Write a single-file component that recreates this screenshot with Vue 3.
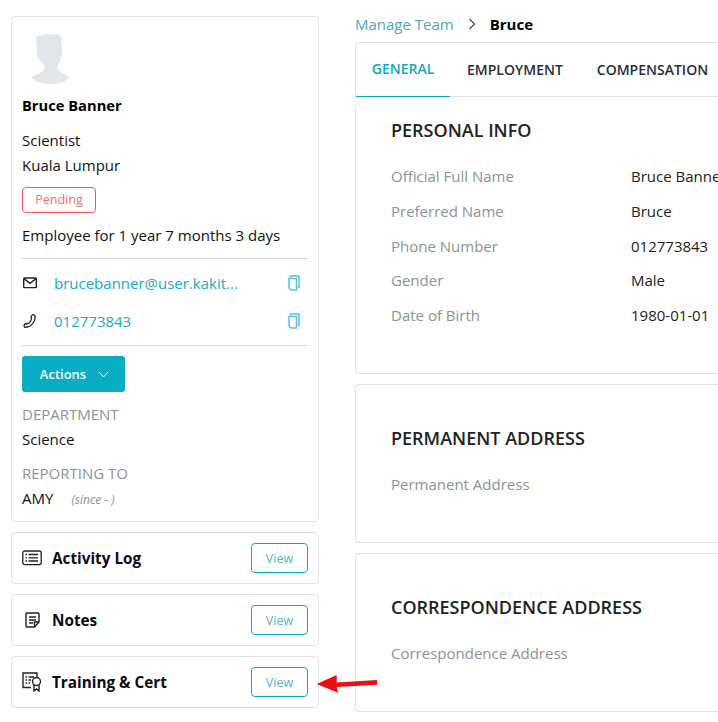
<script setup>
const info = [
  ['Official Full Name', 'Bruce Banner'],
  ['Preferred Name', 'Bruce'],
  ['Phone Number', '012773843'],
  ['Gender', 'Male'],
  ['Date of Birth', '1980-01-01'],
]
</script>

<template>
  <div class="page">
    <aside class="left">
      <section class="card profile">
        <svg class="avatar" width="60" height="52" viewBox="0 0 60 52">
          <path d="M14 5 L17 2 L20 3 L24 1 L30 2 L34 1 L38 3 L40 6 L39 9 L40 14 L40 20 C40 25 38 29 36 31 C35 33 35 35 36 37 C39 40 44 42 48 44 C43 49 36 51 28 51 C20 51 14 49 9 44 C14 42 19 40 22 37 C23 35 23 33 21 31 C18 28 15 25 15 20 L15 12 Z" fill="#e2e5e9"/>
        </svg>
        <div class="name">Bruce Banner</div>
        <div class="line job">Scientist</div>
        <div class="line city">Kuala Lumpur</div>
        <div class="badge">Pending</div>
        <div class="line tenure">Employee for 1 year 7 months 3 days</div>
        <div class="rule"></div>
        <div class="contact first">
          <svg class="cicon" width="16" height="12" viewBox="0 0 16 12" fill="none" stroke="#222" stroke-width="1.400"><rect x="1.700" y="1" width="12.600" height="9.600" rx="0.800"/><path d="M2 1.600 L8 6.400 L14 1.600"/></svg>
          <span class="link">brucebanner@user.kakit...</span>
          <svg class="copy" width="12" height="16" viewBox="0 0 12 16" fill="none" stroke="#5cc0d6" stroke-width="1.500"><path d="M2.500 2.500 V1 H11 V12.500 H9.500"/><path d="M1 3.500 H8.500 V15 H3 L1 13 Z"/></svg>
        </div>
        <div class="contact second">
          <svg class="cicon" width="16" height="16" viewBox="0 0 16 16" fill="none" stroke="#222" stroke-width="1.300"><path d="M13 5 C13 9 9 13.500 5 14 L3 14.400 C1.800 13.500 1.800 11.800 3 10.800 L5 10.500 L5.500 11 C7.800 9.800 9.300 7.500 9.500 5 L9 4 C9.600 2.200 10.700 1.400 11.500 1.600 C12.800 2 13.500 3.500 13 5 Z"/></svg>
          <span class="link">012773843</span>
          <svg class="copy" width="12" height="16" viewBox="0 0 12 16" fill="none" stroke="#5cc0d6" stroke-width="1.500"><path d="M2.500 2.500 V1 H11 V12.500 H9.500"/><path d="M1 3.500 H8.500 V15 H3 L1 13 Z"/></svg>
        </div>
        <div class="rule rule2"></div>
        <button class="actions">
          <span>Actions</span>
          <svg width="11" height="7" viewBox="0 0 11 7" fill="none" stroke="#fff" stroke-width="1"><path d="M1 1 L5.500 6 L10 1"/></svg>
        </button>
        <div class="label dept">DEPARTMENT</div>
        <div class="line sci">Science</div>
        <div class="label rep">REPORTING TO</div>
        <div class="amy"><span>AMY</span><em>(since - )</em></div>
      </section>

      <section class="card mini">
        <svg width="20" height="16" viewBox="0 0 20 16" fill="none" stroke="#222" stroke-width="1.300"><rect x="0.800" y="1" width="18.400" height="13.600" rx="2"/><path d="M6.500 4.500 H16 M6.500 7.800 H16 M6.500 11 H16 M3.500 4.500 H5 M3.500 7.800 H5 M3.500 11 H5"/></svg>
        <strong>Activity Log</strong>
        <button class="view">View</button>
      </section>
      <section class="card mini">
        <svg class="ni" width="15" height="16" viewBox="0 0 15 16" fill="none" stroke="#222" stroke-width="1.400"><path d="M2 1 H13 Q14 1 14 2 V10 L9.500 15 H2 Q1 15 1 14 V2 Q1 1 2 1 Z"/><path d="M9.500 15 V10 H14 M4 5 H11 M4 8 H11 M4 11 H8"/></svg>
        <strong>Notes</strong>
        <button class="view">View</button>
      </section>
      <section class="card mini">
        <svg width="20" height="20" viewBox="0 0 20 20" fill="none" stroke="#222" stroke-width="1.400"><path d="M9 15.500 H1 V1 H15 V5"/><path d="M3.500 5 H5 M6.500 5 H12 M3.500 8 H5 M6.500 8 H9 M3.500 11 H5 M6.500 11 H8"/><circle cx="14.500" cy="9.500" r="4"/><path d="M12 13 V19 L14.500 17 L17 19 V13"/></svg>
        <strong>Training &amp; Cert</strong>
        <button class="view">View</button>
      </section>
    </aside>

    <main class="right">
      <nav class="crumb">
        <span class="crumb-link">Manage Team</span>
        <svg width="8" height="12" viewBox="0 0 8 12" fill="none" stroke="#444" stroke-width="1.200"><path d="M1.500 1 L6.500 6 L1.500 11"/></svg>
        <strong>Bruce</strong>
      </nav>
      <div class="tabs">
        <div class="tab active">GENERAL</div>
        <div class="tab">EMPLOYMENT</div>
        <div class="tab">COMPENSATION</div>
      </div>
      <section class="panel personal">
        <h2>PERSONAL INFO</h2>
        <div class="rows">
          <div class="row" v-for="r in info" :key="r[0]">
            <span class="key">{{ r[0] }}</span>
            <span class="val">{{ r[1] }}</span>
          </div>
        </div>
      </section>
      <section class="panel addr">
        <h2>PERMANENT ADDRESS</h2>
        <div class="key">Permanent Address</div>
      </section>
      <section class="panel addr">
        <h2>CORRESPONDENCE ADDRESS</h2>
        <div class="key">Correspondence Address</div>
      </section>
    </main>

    <svg class="arrow" width="64" height="24" viewBox="0 0 64 24">
      <path d="M1.700 12 L21.700 3 L21.700 10.500 L62 8 L62 12.700 L21.700 15 L23 20.700 Z" fill="#f00c12"/>
    </svg>
  </div>
</template>

<style>
html, body { margin: 0; background: #fff; }
</style>

<style scoped>
.page {
  position: relative;
  width: 718px;
  height: 722px;
  overflow: hidden;
  display: flex;
  gap: 36px;
  padding: 16px 0 0 11px;
  box-sizing: border-box;
  font-family: "Open Sans", "Noto Sans", sans-serif;
  font-size: 15px;
  color: #111;
}
.left { width: 308px; flex: none; display: flex; flex-direction: column; gap: 10px; }
.card { border: 1px solid #dfe2e6; border-radius: 4px; box-sizing: border-box; background: #fff; }
.profile { height: 506px; padding: 16px 10px 0; display: flex; flex-direction: column; }
.avatar { display: block; height: 52px; flex: none; }
.name { font-weight: 700; font-size: 14.700px; line-height: 20px; margin-top: 10px; color: #000; }
.line { line-height: 25px; font-size: 15px; }
.job { margin-top: 13px; }
.badge {
  align-self: flex-start; box-sizing: border-box; width: 74px; height: 26px; margin-top: 9px;
  border: 1px solid #f2555c; border-radius: 4px; color: #f56a75; font-size: 12.500px;
  line-height: 24px; text-align: center;
}
.tenure { margin-top: 10px; }
.rule { height: 1px; background: #d5d8dd; margin-top: 10px; flex: none; }
.contact { display: flex; align-items: center; height: 38px; }
.contact.first { margin-top: 5px; }
.cicon { width: 16px; flex: none; }
.link { color: #22a8c4; margin-left: 16px; flex: 1; font-size: 15px; }
.copy { margin-right: 8px; }
.rule2 { margin-top: 5px; }
.actions {
  align-self: flex-start; margin-top: 10px; width: 103px; height: 36px; border: 0; border-radius: 3px;
  background: #09adc3; color: #fff; font: 600 13px "Open Sans", sans-serif;
  display: flex; align-items: center; justify-content: center; gap: 12px; padding: 0 0 0 2px;
}
.label { color: #8d9199; line-height: 22px; font-size: 15px; }
.dept { margin-top: 11px; }
.sci { margin-top: 2px; }
.rep { margin-top: 10px; }
.amy { display: flex; align-items: center; line-height: 25px; gap: 18px; margin-top: 1px; }
.amy em { font-size: 12px; color: #8d9199; padding-top: 2px; }
.mini { height: 52px; display: flex; align-items: center; padding: 0 10px; }
.mini svg { flex: none; }
.mini strong { margin-left: 10px; flex: 1; font-size: 15.300px; color: #0a0a14; }
.mini .ni { margin: 0 2px 0 3px; }
.view {
  width: 57px; height: 30px; border: 1px solid #09adc3; border-radius: 4px; background: #fff;
  color: #4fb3c9; font: 12.500px "Open Sans", sans-serif; padding: 0;
}
.right { flex: none; width: 400px; }
.crumb { display: flex; align-items: center; height: 18px; font-size: 15px; margin-top: -1px; padding-bottom: 1px; }
.crumb-link { color: #4ea6bb; }
.crumb svg { margin: 0 14px 0 14px; }
.crumb strong { color: #000; }
.tabs {
  display: flex; height: 55px; margin-top: 8px; border: 1px solid #dfe2e6; border-right: 0;
  border-radius: 4px 0 0 4px; box-sizing: border-box;
}
.tab {
  font-size: 14px; font-weight: 600; color: #2a2e36; line-height: 53px; margin-right: 34px;
}
.tab:first-child { margin-right: 17px; }
.tab.active {
  color: #13a7c0; width: 94px; text-align: center; box-sizing: border-box; height: 54px;
  border-bottom: 1px solid #13a7c0; line-height: 51px;
}
.panel {
  border: 1px solid #dfe2e6; border-right: 0; border-radius: 4px 0 0 4px;
  box-sizing: border-box; padding-left: 35px; margin-top: 10px; background: #fff;
}
.panel h2 { margin: 0; font-size: 18px; font-weight: 600; color: #222; line-height: 24px; }
.personal { height: 267px; padding-top: 11px; border-top: 0; border-radius: 0 0 0 4px; }
.rows { margin-top: 17px; }
.row { display: flex; height: 34.700px; align-items: center; white-space: nowrap; }
.key { color: #8d9199; font-size: 15px; line-height: 20px; }
.row .key { width: 240px; flex: none; }
.val { color: #222; font-size: 15px; }
.addr { height: 159px; padding-top: 41px; }
.addr .key { margin-top: 24px; }
.arrow { position: absolute; left: 315px; top: 672px; }
</style>
